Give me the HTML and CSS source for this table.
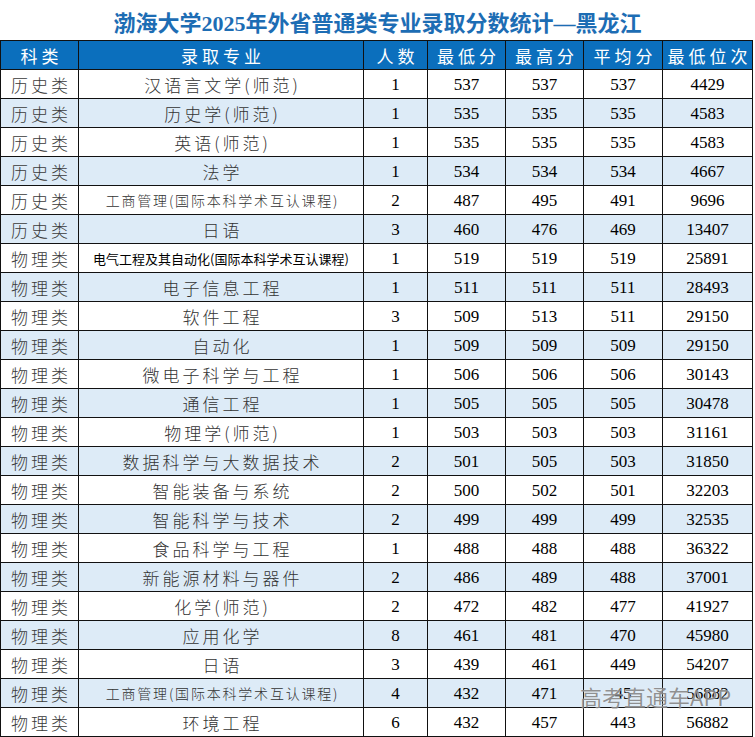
FILE: index.html
```html
<!DOCTYPE html>
<html lang="zh">
<head>
<meta charset="utf-8">
<link rel="stylesheet" href="styles.css">
</head>
<body>
<div class="page">
  <h1 class="title">渤海大学2025年外省普通类专业录取分数统计—黑龙江</h1>
  <div class="grid">
    <div class="c hd">科类</div><div class="c hd">录取专业</div><div class="c hd">人数</div><div class="c hd">最低分</div><div class="c hd">最高分</div><div class="c hd">平均分</div><div class="c hd">最低位次</div>

    <div class="c k">历史类</div><div class="c m">汉语言文学(师范)</div><div class="c n">1</div><div class="c n">537</div><div class="c n">537</div><div class="c n">537</div><div class="c n">4429</div>
    <div class="c k b">历史类</div><div class="c m b">历史学(师范)</div><div class="c n b">1</div><div class="c n b">535</div><div class="c n b">535</div><div class="c n b">535</div><div class="c n b">4583</div>
    <div class="c k">历史类</div><div class="c m">英语(师范)</div><div class="c n">1</div><div class="c n">535</div><div class="c n">535</div><div class="c n">535</div><div class="c n">4583</div>
    <div class="c k b">历史类</div><div class="c m b">法学</div><div class="c n b">1</div><div class="c n b">534</div><div class="c n b">534</div><div class="c n b">534</div><div class="c n b">4667</div>
    <div class="c k">历史类</div><div class="c m s">工商管理(国际本科学术互认课程)</div><div class="c n">2</div><div class="c n">487</div><div class="c n">495</div><div class="c n">491</div><div class="c n">9696</div>
    <div class="c k b">历史类</div><div class="c m b">日语</div><div class="c n b">3</div><div class="c n b">460</div><div class="c n b">476</div><div class="c n b">469</div><div class="c n b">13407</div>
    <div class="c k">物理类</div><div class="c m xs">电气工程及其自动化(国际本科学术互认课程)</div><div class="c n">1</div><div class="c n">519</div><div class="c n">519</div><div class="c n">519</div><div class="c n">25891</div>
    <div class="c k b">物理类</div><div class="c m b">电子信息工程</div><div class="c n b">1</div><div class="c n b">511</div><div class="c n b">511</div><div class="c n b">511</div><div class="c n b">28493</div>
    <div class="c k">物理类</div><div class="c m">软件工程</div><div class="c n">3</div><div class="c n">509</div><div class="c n">513</div><div class="c n">511</div><div class="c n">29150</div>
    <div class="c k b">物理类</div><div class="c m b">自动化</div><div class="c n b">1</div><div class="c n b">509</div><div class="c n b">509</div><div class="c n b">509</div><div class="c n b">29150</div>
    <div class="c k">物理类</div><div class="c m">微电子科学与工程</div><div class="c n">1</div><div class="c n">506</div><div class="c n">506</div><div class="c n">506</div><div class="c n">30143</div>
    <div class="c k b">物理类</div><div class="c m b">通信工程</div><div class="c n b">1</div><div class="c n b">505</div><div class="c n b">505</div><div class="c n b">505</div><div class="c n b">30478</div>
    <div class="c k">物理类</div><div class="c m">物理学(师范)</div><div class="c n">1</div><div class="c n">503</div><div class="c n">503</div><div class="c n">503</div><div class="c n">31161</div>
    <div class="c k b">物理类</div><div class="c m b">数据科学与大数据技术</div><div class="c n b">2</div><div class="c n b">501</div><div class="c n b">505</div><div class="c n b">503</div><div class="c n b">31850</div>
    <div class="c k">物理类</div><div class="c m">智能装备与系统</div><div class="c n">2</div><div class="c n">500</div><div class="c n">502</div><div class="c n">501</div><div class="c n">32203</div>
    <div class="c k b">物理类</div><div class="c m b">智能科学与技术</div><div class="c n b">2</div><div class="c n b">499</div><div class="c n b">499</div><div class="c n b">499</div><div class="c n b">32535</div>
    <div class="c k">物理类</div><div class="c m">食品科学与工程</div><div class="c n">1</div><div class="c n">488</div><div class="c n">488</div><div class="c n">488</div><div class="c n">36322</div>
    <div class="c k b">物理类</div><div class="c m b">新能源材料与器件</div><div class="c n b">2</div><div class="c n b">486</div><div class="c n b">489</div><div class="c n b">488</div><div class="c n b">37001</div>
    <div class="c k">物理类</div><div class="c m">化学(师范)</div><div class="c n">2</div><div class="c n">472</div><div class="c n">482</div><div class="c n">477</div><div class="c n">41927</div>
    <div class="c k b">物理类</div><div class="c m b">应用化学</div><div class="c n b">8</div><div class="c n b">461</div><div class="c n b">481</div><div class="c n b">470</div><div class="c n b">45980</div>
    <div class="c k">物理类</div><div class="c m">日语</div><div class="c n">3</div><div class="c n">439</div><div class="c n">461</div><div class="c n">449</div><div class="c n">54207</div>
    <div class="c k b">物理类</div><div class="c m s b">工商管理(国际本科学术互认课程)</div><div class="c n b">4</div><div class="c n b">432</div><div class="c n b">471</div><div class="c n b">45</div><div class="c n b">56882</div>
    <div class="c k">物理类</div><div class="c m">环境工程</div><div class="c n">6</div><div class="c n">432</div><div class="c n">457</div><div class="c n">443</div><div class="c n">56882</div>
  </div>
  <div class="watermark">高考直通车APP</div>
</div>
</body>
</html>
```

FILE: styles.css
```css
* { box-sizing: border-box; }
html, body { margin: 0; padding: 0; background: #fff; }
.page {
  position: relative;
  width: 755px;
  height: 737px;
  overflow: hidden;
}
.title {
  margin: 0;
  height: 40px;
  display: flex;
  align-items: center;
  justify-content: center;
  font-family: "Liberation Serif", "Noto Sans CJK SC", serif;
  font-weight: 700;
  font-size: 22px;
  color: #1d6db4;
  padding-top: 1px;
}
.grid {
  display: grid;
  grid-template-columns: 77px 284px 63px 77px 77px 78px 89px;
  grid-auto-rows: 28px;
  gap: 1px;
  padding: 1px;
  background: #111;
  width: 753px;
}
.c {
  background: #fff;
  display: flex;
  align-items: center;
  justify-content: center;
  white-space: nowrap;
  overflow: hidden;
}
.c.b { background: #ddebf7; }
.hd {
  background: #0b6fbd;
  color: #fff;
  font-family: "Noto Sans CJK SC", sans-serif;
  font-size: 17px;
  letter-spacing: 4px;
  padding-left: 4px;
}
.k {
  font-family: "Noto Sans CJK SC", sans-serif;
  font-size: 17px;
  letter-spacing: 3px;
  padding-left: 3px;
  color: #3a3a3a;
  font-weight: 300;
}
.m {
  font-family: "Noto Sans CJK SC", sans-serif;
  font-size: 17px;
  letter-spacing: 3px;
  padding-left: 3px;
  color: #333;
  font-weight: 300;
}
.m.s {
  font-size: 14px;
  letter-spacing: 1.8px;
}
.m.xs {
  font-size: 13px;
  letter-spacing: 0;
  padding-left: 0;
  color: #000;
  font-weight: 400;
}
.n {
  font-family: "Liberation Serif", serif;
  font-size: 17px;
  color: #000;
  padding-top: 1px;
}
.watermark {
  position: absolute;
  left: 580px;
  top: 680px;
  font-family: "Noto Sans CJK SC", sans-serif;
  font-size: 22px;
  color: rgba(110, 110, 110, 0.75);
  text-shadow: 0 0 1px rgba(255,255,255,0.8);
  white-space: nowrap;
}
```
